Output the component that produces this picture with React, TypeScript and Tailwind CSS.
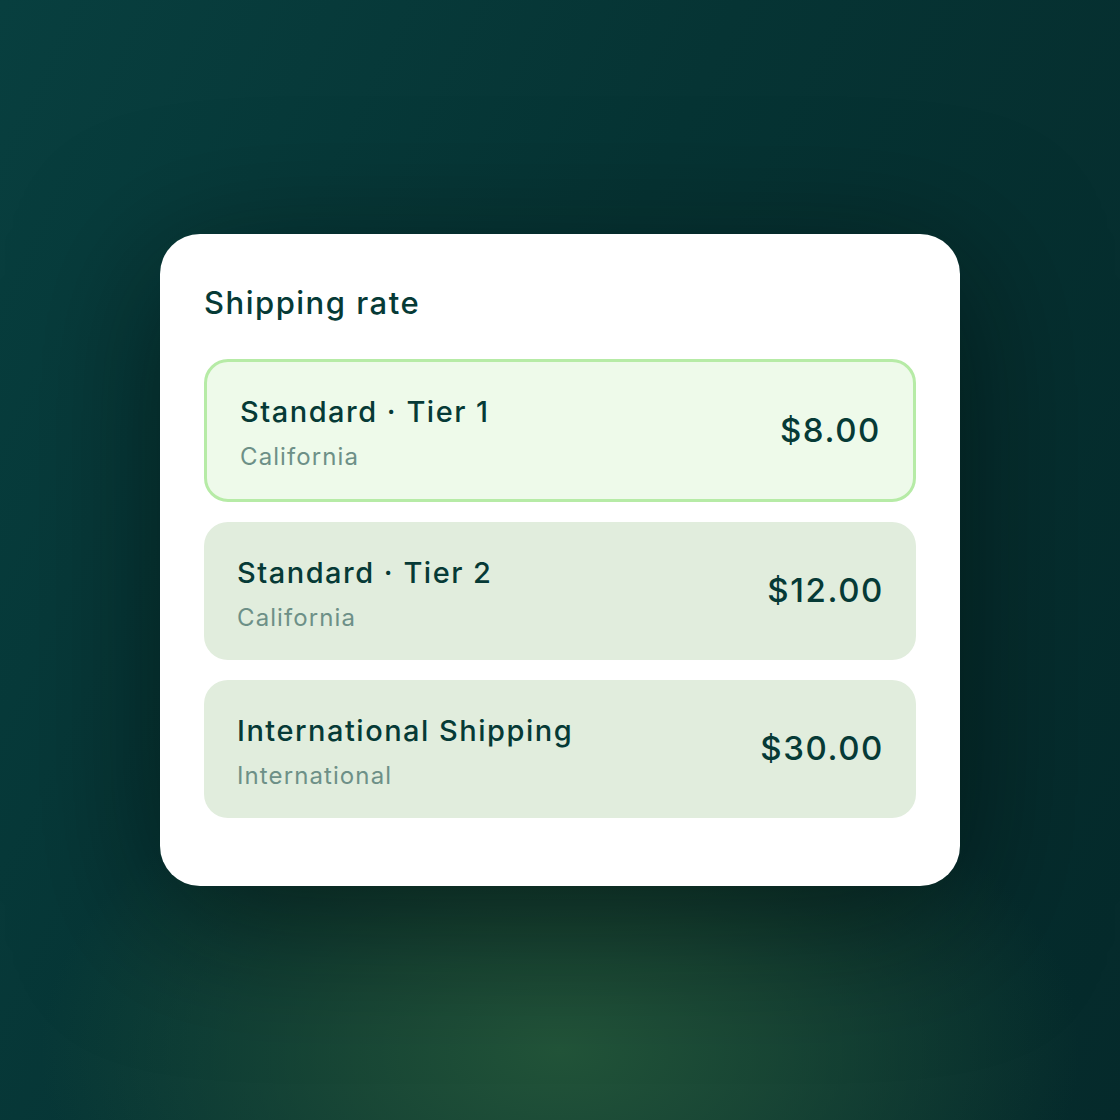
import React from "react";

const rates = [
  { name: "Standard · Tier 1", region: "California", price: "$8.00", selected: true },
  { name: "Standard · Tier 2", region: "California", price: "$12.00", selected: false },
  { name: "International Shipping", region: "International", price: "$30.00", selected: false },
];

export default function App() {
  return (
    <div
      className="w-[1120px] h-[1120px] flex items-center justify-center"
      style={{
        fontFamily: "Inter, 'Noto Sans', sans-serif",
        background:
          "radial-gradient(ellipse 520px 320px at 560px 1050px, #225439 0%, rgba(31,78,55,0.75) 40%, rgba(20,60,45,0) 100%), linear-gradient(115deg, #083f3f 0%, #063434 45%, #052a2b 100%)",
      }}
    >
      <div className="w-[800px] h-[652px] bg-white rounded-[40px] px-[44px] pt-[51px] shadow-[0_30px_140px_rgba(0,10,8,0.55)] flex flex-col">
        <h1 className="text-[31px] leading-[36px] font-medium text-[#063a36] tracking-[1.5px]">Shipping rate</h1>
        <div className="mt-[38px] flex flex-col gap-[20px]">
          {rates.map((r) =>
            r.selected ? (
              <div
                key={r.name}
                className="h-[143px] rounded-[24px] border-[3px] border-[#b6eba6] bg-[#eefaea] pl-[33px] pr-[32px] pt-[32px] flex items-start justify-between"
              >
                <Info r={r} />
                <div className="self-center -mt-[32px] text-[33px] font-medium text-[#063a36] tracking-[1.6px]">{r.price}</div>
              </div>
            ) : (
              <div
                key={r.name}
                className="h-[138px] rounded-[24px] bg-[#e1eddd] pl-[33px] pr-[32px] pt-[33px] flex items-start justify-between"
              >
                <Info r={r} />
                <div className="self-center -mt-[33px] text-[33px] font-medium text-[#063a36] tracking-[1.6px]">{r.price}</div>
              </div>
            )
          )}
        </div>
      </div>
    </div>
  );
}

function Info({ r }: { r: { name: string; region: string } }) {
  return (
    <div className="flex flex-col">
      <div className="text-[29px] leading-[36px] font-medium text-[#063a36] tracking-[1.5px]">{r.name}</div>
      <div className="text-[24px] leading-[30px] mt-[12px] text-[#6d9087] tracking-[1.1px]">{r.region}</div>
    </div>
  );
}
